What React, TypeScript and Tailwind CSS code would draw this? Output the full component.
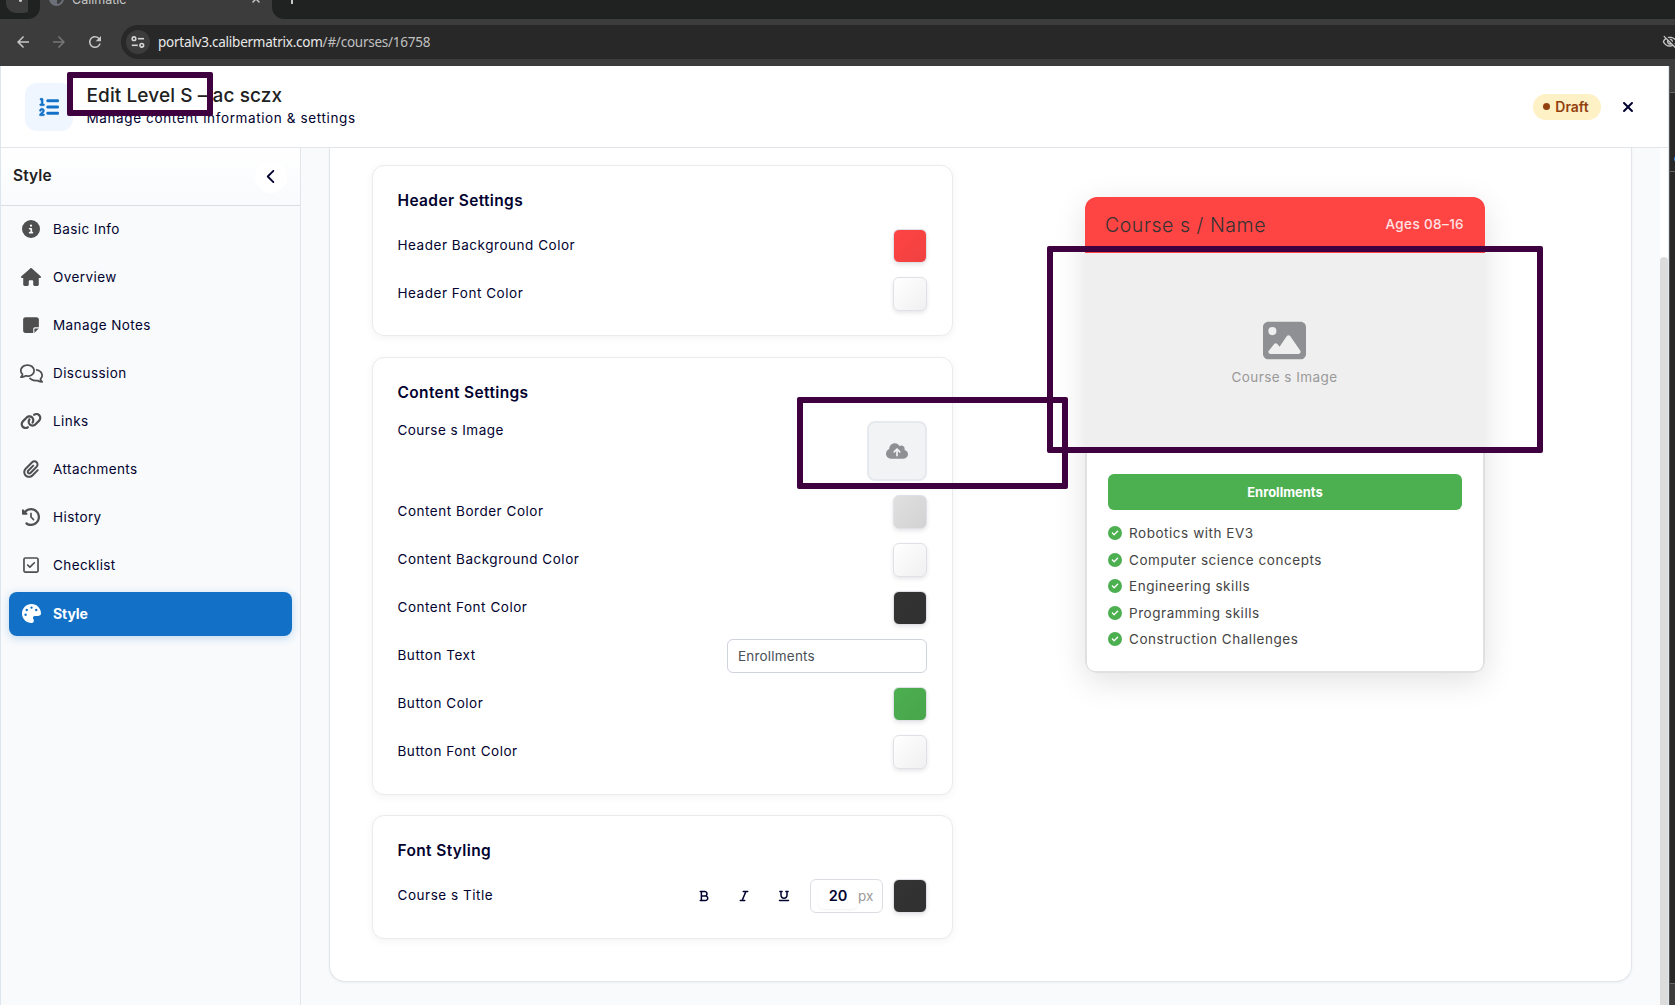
import React from "react";
import {
  FaListOl, FaCircleInfo, FaHouse, FaNoteSticky, FaRegComments, FaLink, FaPaperclip,
  FaClockRotateLeft, FaRegSquareCheck, FaPalette, FaChevronLeft, FaXmark,
  FaCloudArrowUp, FaImage, FaCircleCheck, FaBold, FaItalic, FaUnderline,
} from "react-icons/fa6";
import { MdArrowBack, MdArrowForward, MdRefresh, MdOutlineVisibilityOff } from "react-icons/md";

const navItems = [
  { label: "Basic Info", Icon: FaCircleInfo, size: 18 },
  { label: "Overview", Icon: FaHouse, size: 20 },
  { label: "Manage Notes", Icon: FaNoteSticky, size: 18 },
  { label: "Discussion", Icon: FaRegComments, size: 23 },
  { label: "Links", Icon: FaLink, size: 22 },
  { label: "Attachments", Icon: FaPaperclip, size: 18 },
  { label: "History", Icon: FaClockRotateLeft, size: 18 },
  { label: "Checklist", Icon: FaRegSquareCheck, size: 18 },
  { label: "Style", Icon: FaPalette, size: 19, active: true },
];

const skills = [
  "Robotics with EV3",
  "Computer science concepts",
  "Engineering skills",
  "Programming skills",
  "Construction Challenges",
];

function BrowserBar() {
  return (
    <div className="h-[66px] shrink-0 bg-[#3c3c3c] text-[#c7c7c7]">
      <div className="flex h-[19px] overflow-hidden bg-[#1f2221]">
        <div className="w-10 shrink-0 rounded-br-[12px] bg-[#1f2221]">
          <div className="ml-[6px] flex h-[13px] w-7 justify-center rounded-b-[10px] bg-[#3c3c3c]">
            <div className="h-[2px] w-[3px] rounded-b bg-[#c7c7c7]" />
          </div>
        </div>
        <div className="-ml-3 flex h-[19px] w-[244px] shrink-0 items-start bg-[#3c3c3c]">
          <div className="-mt-[19px] h-[38px] w-3 rounded-br-[12px] bg-[#1f2221]" />
          <div className="-mt-[9px] ml-[9px] h-[15px] w-[15px] rounded-full border-2 border-[#6c7078] bg-[linear-gradient(90deg,#6c7078_50%,#3c3c3c_50%)]" />
          <div className="-mt-[9px] ml-[8px] text-[12.5px] leading-[18px]">Calimatic</div>
          <FaXmark className="-mt-[7px] ml-[124px] shrink-0" size={12} />
        </div>
        <div className="flex flex-1 bg-[#3c3c3c]">
          <div className="flex-1 rounded-bl-[12px] bg-[#1f2221] pl-[19px]">
            <div className="h-[4px] w-[2px] bg-[#c7c7c7]" />
          </div>
        </div>
      </div>
      <div className="flex h-[47px] items-center pb-[1px]">
        <MdArrowBack className="ml-[14px]" size={18} />
        <MdArrowForward className="ml-[18px] text-[#777]" size={18} />
        <MdRefresh className="ml-[18px]" size={18} />
        <div className="ml-[17px] flex h-[34px] flex-1 items-center rounded-l-full bg-[#282828]">
          <div className="ml-[5px] flex h-6 w-6 items-center justify-center rounded-full bg-[#3c3c3c]">
            <svg width="14" height="12" viewBox="0 0 14 12" fill="none" stroke="#d5d5d5" strokeWidth="1.6">
              <circle cx="3" cy="2.7" r="1.8" /><path d="M7 2.7h6" />
              <circle cx="10.8" cy="9.3" r="1.8" /><path d="M.8 9.3h6" />
            </svg>
          </div>
          <div className="ml-[8px] flex-1 font-['Noto_Sans'] text-[13.5px] tracking-[-0.24px] text-[#c0c0c0]">
            <span className="text-[#e8e8e8]">portalv3.calibermatrix.com</span>/#/courses/16758
          </div>
          <div className="w-[13px] overflow-hidden"><MdOutlineVisibilityOff size={16} /></div>
        </div>
      </div>
    </div>
  );
}

function PageHeader() {
  return (
    <header className="flex h-[82px] shrink-0 items-center border-b border-[#e2e5ea] bg-white pl-6 pr-[32px]">
      <div className="flex h-12 w-12 items-center justify-center rounded-xl bg-[#eff6ff]">
        <FaListOl size={20} stroke="currentColor" strokeWidth={12} className="text-[#1271c7]" />
      </div>
      <div className="ml-[13.5px] flex-1 whitespace-nowrap pb-px">
        <h1 className="text-[19px] font-medium leading-6 tracking-[0.1px] text-[#212121]">Edit Level S – ac sczx</h1>
        <p className="text-[13.5px] leading-[21px] tracking-[0.62px] text-[#02022f]">Manage content information &amp; settings</p>
      </div>
      <div className="flex h-[26px] w-[68px] items-center justify-center gap-[5px] rounded-full bg-[#fef1c5] pr-[2px] text-[14px] font-semibold text-[#92400e]">
        <span className="h-[7px] w-[7px] rounded-full bg-[#92400e]" />
        Draft
      </div>
      <FaXmark size={16} className="ml-[19px] text-[#02022f]" />
    </header>
  );
}

function Sidebar() {
  return (
    <aside className="flex w-[300px] shrink-0 flex-col border-r border-[#e2e5ea] bg-[#f8fafc]">
      <div className="flex h-[58px] shrink-0 items-center justify-between border-b border-[#dadfe5] bg-gradient-to-b from-white to-[#f8fafc] pl-[12px] pr-[13px]">
        <span className="pb-px text-[15.5px] font-semibold tracking-[0.1px] text-[#212121]">Style</span>
        <span className="flex h-8 w-8 items-center justify-center rounded-full bg-white"><FaChevronLeft size={15} className="text-[#02022f]" /></span>
      </div>
      <nav className="flex flex-col gap-1 px-2 pt-[2px]">
        {navItems.map(({ label, Icon, size, active }) => (
          <div
            key={label}
            className={
              active
                ? "flex h-11 items-center rounded-lg bg-[#1271c7] pb-[2px] text-[14px] font-bold tracking-[-0.1px] text-white shadow-[0_2px_8px_rgba(18,113,199,0.25)]"
                : "flex h-11 items-center pb-[2px] text-[13.5px] tracking-[0.42px] text-[#02022f]"
            }
          >
            <span className={active ? "flex w-11 justify-center text-white" : "flex w-11 justify-center text-[#4f4f4f]"}>
              <Icon size={size} />
            </span>
            <span>{label}</span>
          </div>
        ))}
      </nav>
    </aside>
  );
}

function Swatch({ tone }: { tone: string }) {
  return <span className={`h-[34px] w-[34px] shrink-0 rounded-[6px] border border-[#dfe1e6] shadow-[0_2px_4px_rgba(0,0,0,0.1)] ${tone}`} />;
}

const tones = {
  red: "bg-linear-135 from-[#ff4444] to-[#f04040]",
  white: "bg-linear-135 from-white to-[#f0f0f0]",
  gray: "bg-linear-135 from-[#e0e0e0] to-[#d2d2d2]",
  dark: "bg-linear-135 from-[#333333] to-[#303030]",
  green: "bg-linear-135 from-[#4caf50] to-[#48a54b]",
};

function Row({ label, children }: { label: string; children: React.ReactNode }) {
  return (
    <div className="flex h-[34px] items-center justify-between">
      <span className="pb-[2px] text-[13.5px] tracking-[0.53px] text-[#02022f]">{label}</span>
      {children}
    </div>
  );
}

function Panel({ title, children }: { title: string; children: React.ReactNode }) {
  return (
    <section className="rounded-xl border border-[#e9ebee] bg-white pb-6 pl-[24.5px] pr-[25px] pt-[23px] shadow-[0_2px_8px_rgba(0,0,0,0.05)]">
      <h2 className="text-[15.5px] font-semibold leading-6 tracking-[0.36px] text-[#02022f]">{title}</h2>
      {children}
    </section>
  );
}

function SettingsColumn() {
  return (
    <div className="flex w-[581px] shrink-0 flex-col gap-[21px]">
      <Panel title="Header Settings">
        <div className="mt-4 flex flex-col gap-[14px]">
          <Row label="Header Background Color"><Swatch tone={tones.red} /></Row>
          <Row label="Header Font Color"><Swatch tone={tones.white} /></Row>
        </div>
      </Panel>
      <Panel title="Content Settings">
        <div className="mt-4 flex flex-col gap-[14px] pb-px">
          <div className="flex h-[60px] items-start justify-between">
            <span className="text-[13.5px] leading-[18px] tracking-[0.45px] text-[#02022f]">Course s Image</span>
            <span className="flex h-[60px] w-[60px] items-center justify-center rounded-lg border-2 border-[#e6e9ed] bg-[#f1f3f5] pb-px">
              <FaCloudArrowUp size={22} className="text-[#8f9094]" />
            </span>
          </div>
          <Row label="Content Border Color"><Swatch tone={tones.gray} /></Row>
          <Row label="Content Background Color"><Swatch tone={tones.white} /></Row>
          <Row label="Content Font Color"><Swatch tone={tones.dark} /></Row>
          <Row label="Button Text">
            <span className="flex h-[34px] w-[200px] items-center rounded-md border border-[#cfd3de] bg-white px-[10px] text-[13.5px] tracking-[0.2px] text-[#495057]">Enrollments</span>
          </Row>
          <Row label="Button Color"><Swatch tone={tones.green} /></Row>
          <Row label="Button Font Color"><Swatch tone={tones.white} /></Row>
        </div>
      </Panel>
      <div className="-mt-px flex flex-col">
        <Panel title="Font Styling">
          <div className="mt-4 pb-px">
            <Row label="Course s Title">
              <div className="flex items-center text-[#02022f]">
                <FaBold size={12} />
                <FaItalic size={12} className="ml-7" />
                <FaUnderline size={12} className="ml-7" />
                <span className="ml-[20.5px] flex h-[34px] w-[73px] items-center rounded-md border border-[#dadde2] pl-[7px]">
                  <span className="flex h-[26px] w-[40px] items-center justify-center rounded-md text-[14.5px] font-semibold shadow-[0_1px_2px_rgba(0,0,0,0.06)]">20</span>
                  <span className="text-[13.5px] text-[#999]">px</span>
                </span>
                <span className="ml-[10px] flex"><Swatch tone={tones.dark} /></span>
              </div>
            </Row>
          </div>
        </Panel>
      </div>
    </div>
  );
}

function Preview() {
  return (
    <div className="ml-[132px] mt-8 flex h-[476px] w-[400px] flex-col overflow-hidden rounded-xl bg-white shadow-[0_8px_32px_rgba(0,0,0,0.12)]">
      <div className="flex h-14 shrink-0 items-center justify-between bg-[#ff4444] pl-[20px] pr-[21px]">
        <span className="pt-px text-[19.5px] font-light tracking-[0.55px] text-[#333]">Course s / Name</span>
        <span className="pb-px text-[13.5px] font-medium tracking-[0.38px] text-white/85">Ages 08–16</span>
      </div>
      <div className="flex h-[200px] shrink-0 flex-col items-center bg-[#efefef] pr-px pt-[66px] text-[#8f9094]">
        <FaImage size={43} />
        <span className="mt-[5px] text-[13.5px] leading-5 tracking-[0.45px] text-[#999]">Course s Image</span>
      </div>
      <div className="flex-1 rounded-b-[10px] border-2 border-t-0 border-[#e0e0e0] px-[21px] pt-[21px]">
        <div className="flex h-9 items-center justify-center rounded-md bg-[#4caf50] pt-px text-[13px] font-bold text-white">Enrollments</div>
        <ul className="mt-[10px]">
          {skills.map((s) => (
            <li key={s} className="flex h-[26.5px] items-center gap-[7px] text-[13.5px] tracking-[0.54px] text-[#444]">
              <FaCircleCheck size={14} className="text-[#4caf50]" />
              {s}
            </li>
          ))}
        </ul>
      </div>
    </div>
  );
}

export default function App() {
  return (
    <div className="relative flex h-[1005px] w-[1675px] flex-col overflow-hidden bg-[#282828] font-['Inter',sans-serif]">
      <BrowserBar />
      <div className="flex min-h-0 flex-1">
        <div className="flex w-[1669px] flex-col border-x border-[#dde5ef] bg-white">
          <PageHeader />
          <div className="flex min-h-0 flex-1">
            <Sidebar />
            <main className="flex-1 bg-[#f8fafc] pl-7 pr-7">
              <div className="flex h-[834px] rounded-b-2xl border border-t-0 border-[#e2e5ea] bg-white pl-[42px] pt-[17px] shadow-[0_1px_3px_rgba(0,0,0,0.05)]">
                <SettingsColumn />
                <Preview />
              </div>
            </main>
            <div className="flex w-2 flex-col bg-white pt-[109px]">
              <div className="flex-1 rounded-t-full bg-[#dcdcdc]" />
            </div>
          </div>
        </div>
        <div className="flex flex-1 flex-col border-l border-[#555]">
          <div className="h-[27px] border-b border-[#666] bg-[#3c3c3c]" />
          <div className="flex h-[79px] justify-end border-b border-[#666] pt-[64px]">
            <div className="h-1 w-px rounded-l-full bg-[#2f7fd6]" />
          </div>
          <div className="flex-1" />
          <div className="h-[22px] border-t border-[#666] bg-[#3c3c3c]" />
        </div>
      </div>
      <div className="absolute left-[67px] top-[72px] h-[44px] w-[146px] rounded-[2px] border-[6px] border-[#3f003f]" />
      <div className="absolute left-[797px] top-[397px] h-[92px] w-[271px] rounded-[2px] border-[6px] border-[#3f003f]" />
      <div className="absolute left-[1047px] top-[246px] h-[207px] w-[496px] rounded-[2px] border-[6px] border-[#3f003f]" />
    </div>
  );
}
